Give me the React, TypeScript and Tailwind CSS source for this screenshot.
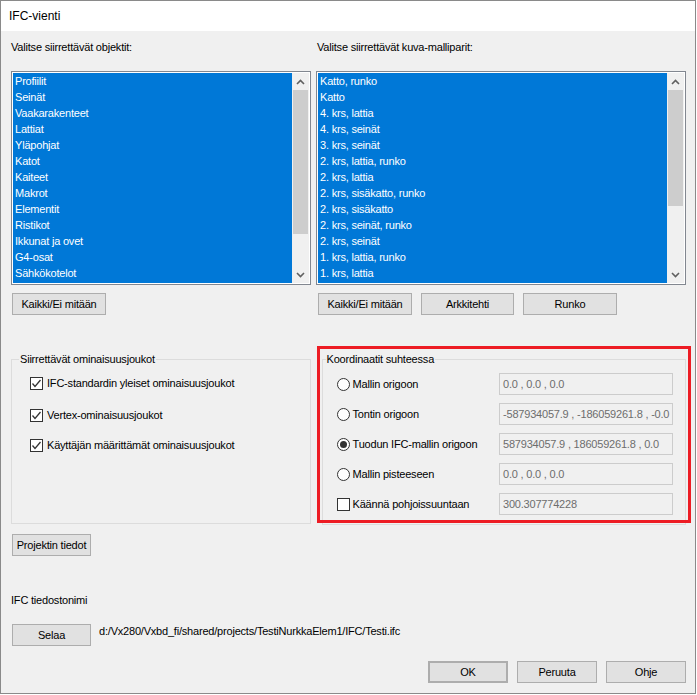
import type React from "react"

const leftItems = [
  "Profiilit",
  "Seinät",
  "Vaakarakenteet",
  "Lattiat",
  "Yläpohjat",
  "Katot",
  "Kaiteet",
  "Makrot",
  "Elementit",
  "Ristikot",
  "Ikkunat ja ovet",
  "G4-osat",
  "Sähkökotelot",
  "Mukautetut",
]

const rightItems = [
  "Katto, runko",
  "Katto",
  "4. krs, lattia",
  "4. krs, seinät",
  "3. krs, seinät",
  "2. krs, lattia, runko",
  "2. krs, lattia",
  "2. krs, sisäkatto, runko",
  "2. krs, sisäkatto",
  "2. krs, seinät, runko",
  "2. krs, seinät",
  "1. krs, lattia, runko",
  "1. krs, lattia",
  "1. krs, seinät, runko",
]

const Arrow = ({ down }: { down?: boolean }) => (
  <svg width="9" height="6" viewBox="0 0 9 6" className="block">
    <polyline
      points={down ? "1,1 4.5,4.5 8,1" : "1,5 4.5,1.5 8,5"}
      fill="none"
      stroke="#606060"
      strokeWidth="1.6"
    />
  </svg>
)

// list box with a fake scrollbar; thumb given in px from top of the track
const ListBox = ({ items, thumbTop, thumbHeight }: { items: string[]; thumbTop: number; thumbHeight: number }) => (
  <div className="h-full border border-[#828790] bg-white p-[1px] flex">
    <div className="flex-1 bg-[#0078d7] overflow-hidden">
      {items.map((item) => (
        <div key={item} className="h-[16px] leading-[16px] pl-[2px] text-white whitespace-nowrap">
          {item}
        </div>
      ))}
    </div>
    <div className="w-[17px] bg-[#f0f0f0] flex flex-col">
      <div className="h-[17px] flex items-center justify-center">
        <Arrow />
      </div>
      <div className="flex-1 px-[1px]">
        <div className="bg-[#cdcdcd]" style={{ marginTop: thumbTop, height: thumbHeight }} />
      </div>
      <div className="h-[17px] flex items-center justify-center">
        <Arrow down />
      </div>
    </div>
  </div>
)

const Button = ({ children, className = "" }: { children: React.ReactNode; className?: string }) => (
  <div
    className={`h-[22px] bg-[#e1e1e1] border border-[#adadad] flex items-center justify-center text-black ${className}`}
  >
    {children}
  </div>
)

const CheckBox = ({ checked }: { checked?: boolean }) => (
  <div className="w-[13px] h-[13px] border border-[#333] bg-white flex items-center justify-center shrink-0">
    {checked && (
      <svg width="11" height="11" viewBox="0 0 11 11">
        <polyline points="1.5,5.5 4,8.5 9.5,2" fill="none" stroke="#333" strokeWidth="1.3" />
      </svg>
    )}
  </div>
)

const Radio = ({ checked }: { checked?: boolean }) => (
  <div className="w-[13px] h-[13px] rounded-full border border-[#333] bg-white flex items-center justify-center shrink-0">
    {checked && <div className="w-[7px] h-[7px] rounded-full bg-[#333]" />}
  </div>
)

const Field = ({ value }: { value: string }) => (
  <div className="w-[174px] h-[22px] border border-[#cccccc] bg-[#f0f0f0] pl-[3px] flex items-center text-[#6d6d6d] whitespace-nowrap overflow-hidden">
    {value}
  </div>
)

export default function App() {
  return (
    <div
      className="w-[696px] h-[694px] border border-[#8a8a8a] bg-[#f0f0f0] flex flex-col text-[11px] tracking-[-0.2px] text-black"
      style={{ fontFamily: '"Liberation Sans", Arial, sans-serif' }}
    >
      {/* title bar */}
      <div className="h-[30px] bg-white pl-[8px] flex items-center text-[12px] tracking-normal">IFC-vienti</div>

      <div className="flex-1 pl-[10px] pr-[9px] flex flex-col">
        {/* lists */}
        <div className="flex gap-[5px]">
          <div className="w-[300px] flex flex-col">
            <div className="mt-[10px] h-[13px] leading-[13px]">Valitse siirrettävät objektit:</div>
            <div className="mt-[17px] h-[214px]">
              <ListBox items={leftItems} thumbTop={0} thumbHeight={144} />
            </div>
            <div className="mt-[8px] flex">
              <Button className="w-[94px] ml-[1px]">Kaikki/Ei mitään</Button>
            </div>
          </div>
          <div className="w-[370px] flex flex-col">
            <div className="mt-[10px] h-[13px] leading-[13px] pl-[1px]">Valitse siirrettävät kuva-malliparit:</div>
            <div className="mt-[17px] h-[214px]">
              <ListBox items={rightItems} thumbTop={0} thumbHeight={116} />
            </div>
            <div className="mt-[8px] flex gap-[9px] pl-[2px]">
              <Button className="w-[94px]">Kaikki/Ei mitään</Button>
              <Button className="w-[93px]">Arkkitehti</Button>
              <Button className="w-[94px]">Runko</Button>
            </div>
          </div>
        </div>

        {/* group boxes */}
        <div className="mt-[44px] h-[166px] flex">
          <div className="relative w-[300px] h-[165px] border border-[#dcdcdc] pl-[18px] pt-[12px]">
            <div className="absolute -top-[7px] left-[7px] px-[1px] h-[13px] leading-[13px] bg-[#f0f0f0]">
              Siirrettävät ominaisuusjoukot
            </div>
            <div className="h-[22px] flex items-center">
              <CheckBox checked />
              <span className="ml-[4px]">IFC-standardin yleiset ominaisuusjoukot</span>
            </div>
            <div className="mt-[10px] h-[22px] flex items-center">
              <CheckBox checked />
              <span className="ml-[4px]">Vertex-ominaisuusjoukot</span>
            </div>
            <div className="mt-[8px] h-[22px] flex items-center">
              <CheckBox checked />
              <span className="ml-[4px]">Käyttäjän määrittämät ominaisuusjoukot</span>
            </div>
          </div>

          <div className="relative ml-[11px] w-[365px] h-[166px] border border-[#dcdcdc] pl-[14px] pr-[12px] pt-[13px] flex flex-col gap-[8px]">
            <div className="absolute -top-[7px] left-[3px] px-[1px] h-[13px] leading-[13px] bg-[#f0f0f0]">
              Koordinaatit suhteessa
            </div>
            {[
              { label: "Mallin origoon", value: "0.0 , 0.0 , 0.0" },
              { label: "Tontin origoon", value: "-587934057.9 , -186059261.8 , -0.0" },
              { label: "Tuodun IFC-mallin origoon", value: "587934057.9 , 186059261.8 , 0.0", checked: true },
              { label: "Mallin pisteeseen", value: "0.0 , 0.0 , 0.0" },
            ].map((row) => (
              <div key={row.label} className="h-[22px] flex items-center justify-between">
                <div className="flex items-center">
                  <Radio checked={row.checked} />
                  <span className="ml-[3px]">{row.label}</span>
                </div>
                <Field value={row.value} />
              </div>
            ))}
            <div className="h-[22px] flex items-center justify-between">
              <div className="flex items-center">
                <CheckBox />
                <span className="ml-[3px]">Käännä pohjoissuuntaan</span>
              </div>
              <Field value="300.307774228" />
            </div>
            {/* red highlight drawn over the group */}
            <div className="absolute -left-[6px] -top-[14px] w-[374px] h-[177px] border-[3px] border-[#ed1c24] pointer-events-none" />
          </div>
        </div>

        <div className="mt-[9px] flex">
          <Button className="w-[79px] ml-[1px]">Projektin tiedot</Button>
        </div>

        <div className="mt-[38px] h-[13px] leading-[13px]">IFC tiedostonimi</div>

        <div className="mt-[17px] flex items-center">
          <Button className="w-[79px] ml-[1px]">Selaa</Button>
          <span className="ml-[8px] -mt-[8px]">d:/Vx280/Vxbd_fi/shared/projects/TestiNurkkaElem1/IFC/Testi.ifc</span>
        </div>

        <div className="mt-[15px] flex justify-end gap-[9px]">
          <Button className="w-[80px] h-[21px] border-2 border-[#0078d7]">OK</Button>
          <Button className="w-[80px] h-[21px]">Peruuta</Button>
          <Button className="w-[80px] h-[21px]">Ohje</Button>
        </div>
      </div>
    </div>
  )
}
